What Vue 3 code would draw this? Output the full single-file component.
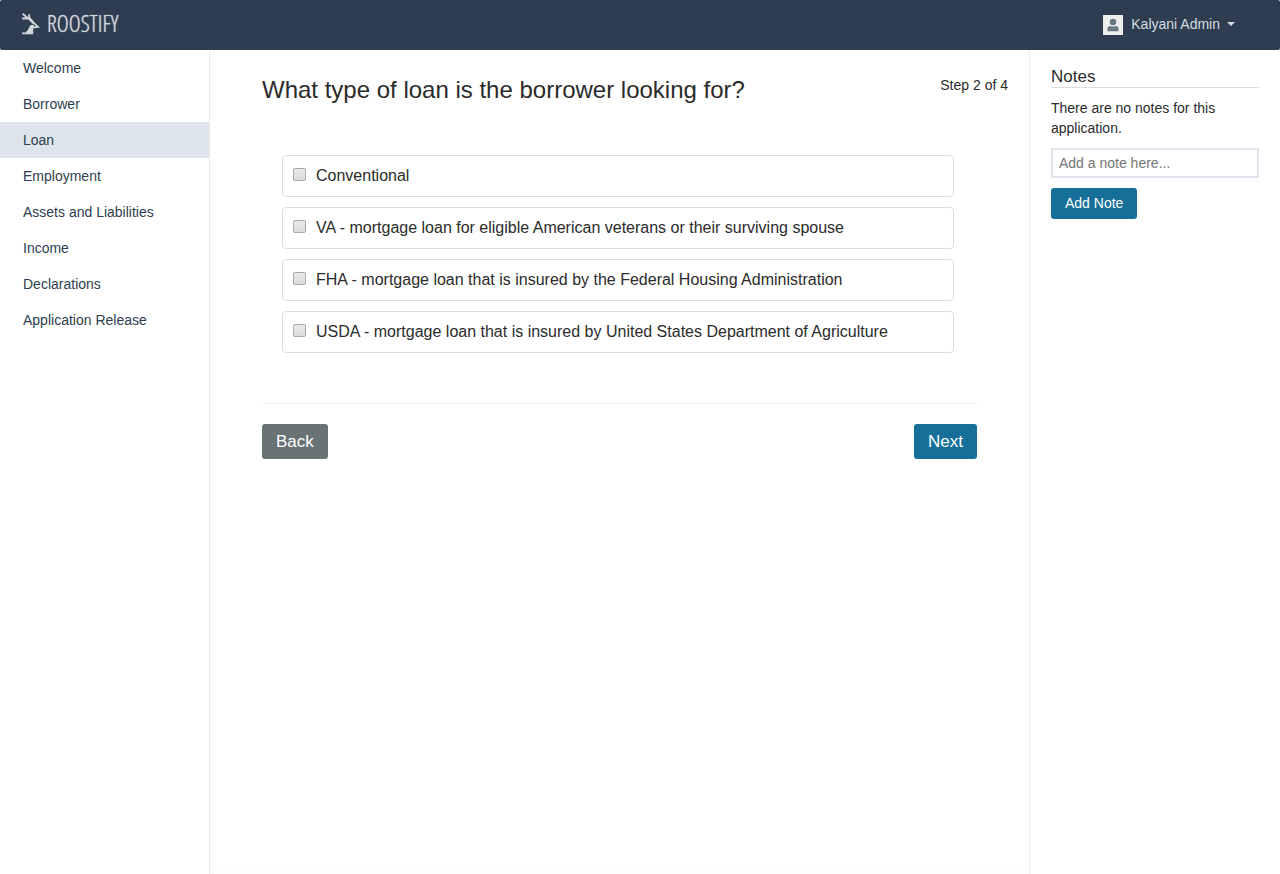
<script setup>
import { ref } from 'vue'

const steps = ['Welcome', 'Borrower', 'Loan', 'Employment', 'Assets and Liabilities', 'Income', 'Declarations', 'Application Release']
const current = 'Loan'
const loans = [
  'Conventional',
  'VA - mortgage loan for eligible American veterans or their surviving spouse',
  'FHA - mortgage loan that is insured by the Federal Housing Administration',
  'USDA - mortgage loan that is insured by United States Department of Agriculture'
]
const selected = ref([])
const note = ref('')
</script>

<template>
  <div class="page">
    <header class="topbar">
      <a class="brand" href="#">
        <svg width="18" height="22" viewBox="0 0 18 22" aria-hidden="true">
          <path d="M.6.8 6 5.2M7.2 1.2V5.5M.2 5.5H8L12 10" fill="none" stroke="#d3d7dc" stroke-width="1.8" />
          <path d="M7.2 4.8 18 14.6 11.2 15.5V21.2H0V19.4H3.8Q6.6 17 8 12.6L11.3 11.6 6.4 6.5Z" fill="#d3d7dc" />
          <path d="M11.3 11.4 13.4 13.4" stroke="#2e3e50" stroke-width="1.2" />
        </svg>
        <span>ROOSTIFY</span>
      </a>
      <button class="user" type="button">
        <svg width="20" height="20" viewBox="0 0 20 20" aria-hidden="true">
          <path d="M0 0H20V20H0Z" fill="#eee" />
          <circle cx="10" cy="7" r="3.3" fill="#687b83" />
          <path d="M4.5 16.3V13.8Q4.5 11 7.2 11Q10 12.2 12.8 11Q15.5 11 15.5 13.8V16.3Z" fill="#687b83" />
        </svg>
        <span>Kalyani Admin</span>
        <i class="caret"></i>
      </button>
    </header>

    <div class="columns">
      <nav class="sidebar">
        <a v-for="step in steps" :key="step" href="#" :class="{ active: step === current }">{{ step }}</a>
      </nav>

      <main class="main">
        <div class="heading">
          <h1>What type of loan is the borrower looking for?</h1>
          <span class="count">Step 2 of 4</span>
        </div>
        <form class="form" @submit.prevent>
          <div class="options">
            <label v-for="loan in loans" :key="loan" class="option">
              <input v-model="selected" type="checkbox" :value="loan">
              <span>{{ loan }}</span>
            </label>
          </div>
          <div class="actions">
            <button class="btn back" type="button">Back</button>
            <button class="btn" type="submit">Next</button>
          </div>
        </form>
      </main>

      <aside class="notes">
        <h2>Notes</h2>
        <p>There are no notes for this application.</p>
        <input v-model="note" type="text" placeholder="Add a note here..." aria-label="Add a note here">
        <button class="btn small" type="button">Add Note</button>
      </aside>
    </div>
  </div>
</template>

<style>
body {
  background: #fff;
}
</style>

<style scoped>
.page, .page * {
  box-sizing: border-box;
}
.page {
  display: flex;
  flex-direction: column;
  min-height: 100vh;
  color: #2b2b2b;
  font: 14px/20px "Liberation Sans", Arial, sans-serif;
}
button, input {
  font: inherit;
}
a {
  text-decoration: none;
}
.topbar {
  display: flex;
  align-items: center;
  justify-content: space-between;
  height: 50px;
  padding: 0 45px 0 22px;
  background: #2e3e50;
  border-radius: 2px;
}
.brand {
  display: flex;
  align-items: center;
  gap: 7px;
  padding-bottom: 3px;
  color: #d3d7dc;
  font: 300 23px/20px "Open Sans Condensed Light", "Open Sans Condensed", "Liberation Sans Narrow", sans-serif;
  text-shadow: 0 0 1px #d3d7dc;
}
.brand span {
  padding-bottom: 2px;
}
.user {
  display: flex;
  align-items: center;
  padding: 0;
  border: 0;
  background: none;
  color: #d5dbe0;
}
.user span {
  margin: 0 7px 2px 8px;
}
.caret {
  border: 4px solid transparent;
  border-top-color: #d5dbe0;
  border-bottom: 0;
  margin-bottom: 2px;
}
.columns {
  display: grid;
  grid-template-columns: 210px 1fr 251px;
  flex: 1;
}
.sidebar {
  border-right: 1px solid #eaeaea;
}
.sidebar a {
  display: block;
  padding: 8px 23px;
  color: #2e3e50;
}
.sidebar .active {
  background: #dde4ec;
}
.main {
  padding: 24px 21px 24px 52px;
  box-shadow: inset 0 0 10px rgba(0, 0, 0, .02);
}
.heading {
  display: flex;
  justify-content: space-between;
  align-items: flex-start;
}
h1 {
  margin: 0;
  font-size: 24px;
  font-weight: 400;
  line-height: 32px;
}
.count {
  padding-top: 1px;
}
.form {
  margin-right: 31px;
}
.options {
  display: grid;
  gap: 10px;
  padding: 49px 23px 50px 20px;
}
.option {
  display: flex;
  align-items: center;
  gap: 10px;
  min-height: 42px;
  padding: 5px 10px;
  border: 1px solid #ddd;
  border-radius: 4px;
  font-size: 16px;
}
.option input {
  appearance: none;
  flex: none;
  width: 13px;
  height: 13px;
  margin: 0 0 3px;
  border: 1px solid #aaa;
  border-radius: 2px;
  background: linear-gradient(#e9e9e9, #dcdcdc);
}
.option input:checked {
  background: #166f98;
}
.actions {
  display: flex;
  justify-content: space-between;
  padding-top: 20px;
  border-top: 1px solid #eee;
}
.btn {
  padding: 6px 14px;
  border: 0;
  border-radius: 3px;
  background: #166f98;
  color: #fff;
  font-size: 17px;
  line-height: 23px;
}
.back {
  background: #687375;
}
.notes {
  padding: 17px 21px;
  border-left: 1px solid #eaeaea;
}
h2 {
  margin: 0 0 10px;
  border-bottom: 1px solid #ddd;
  font-size: 17px;
  font-weight: 400;
  line-height: 20px;
}
.notes p {
  margin: 0 0 10px;
}
.notes input {
  display: block;
  width: 100%;
  height: 30px;
  margin-bottom: 10px;
  padding: 0 6px;
  border: 2px solid #dde4ec;
  color: #2b2b2b;
}
.notes input::placeholder {
  color: #757575;
}
.small {
  padding: 5px 14px;
  font-size: 14px;
  line-height: 21px;
}
</style>
